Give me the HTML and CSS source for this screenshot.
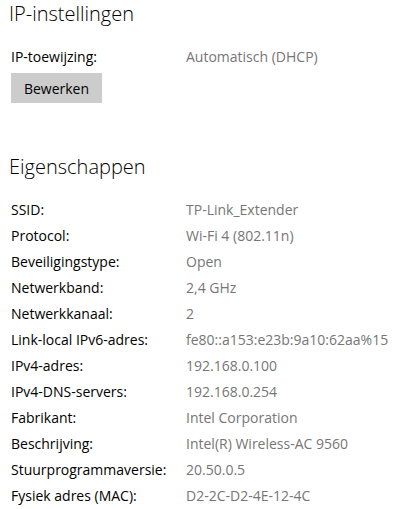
FILE: index.html
```html
<!DOCTYPE html>
<html lang="nl">
<head>
<meta charset="utf-8">
<title>Netwerkeigenschappen</title>
<link rel="stylesheet" href="styles.css">
</head>
<body>
<section class="section">
  <h2 class="heading">IP-instellingen</h2>
  <div class="props">
    <div class="label">IP-toewijzing:</div><div class="value">Automatisch (DHCP)</div>
  </div>
  <button class="btn" type="button">Bewerken</button>
</section>
<section class="section second">
  <h2 class="heading">Eigenschappen</h2>
  <div class="props list">
    <div class="label">SSID:</div><div class="value">TP-Link_Extender</div>
    <div class="label">Protocol:</div><div class="value">Wi-Fi 4 (802.11n)</div>
    <div class="label">Beveiligingstype:</div><div class="value">Open</div>
    <div class="label">Netwerkband:</div><div class="value">2,4 GHz</div>
    <div class="label">Netwerkkanaal:</div><div class="value">2</div>
    <div class="label">Link-local IPv6-adres:</div><div class="value">fe80::a153:e23b:9a10:62aa%15</div>
    <div class="label">IPv4-adres:</div><div class="value">192.168.0.100</div>
    <div class="label">IPv4-DNS-servers:</div><div class="value">192.168.0.254</div>
    <div class="label">Fabrikant:</div><div class="value">Intel Corporation</div>
    <div class="label">Beschrijving:</div><div class="value">Intel(R) Wireless-AC 9560</div>
    <div class="label">Stuurprogrammaversie:</div><div class="value">20.50.0.5</div>
    <div class="label">Fysiek adres (MAC):</div><div class="value">D2-2C-D2-4E-12-4C</div>
  </div>
</section>
</body>
</html>
```

FILE: styles.css
```css
html, body {
  margin: 0;
  padding: 0;
  background: #ffffff;
}
body {
  font-family: "Open Sans", "Noto Sans", sans-serif;
  font-size: 14px;
  color: #000000;
  padding-left: 11px;
}
.section {
  display: flex;
  flex-direction: column;
  align-items: flex-start;
}
.second {
  margin-top: 50px;
}
.heading {
  margin: 0 0 16px -2px;
  font-size: 20px;
  font-weight: 300;
  line-height: 28px;
  color: #000000;
}
.props {
  display: grid;
  grid-template-columns: 175px auto;
  grid-auto-rows: 26px;
  align-items: center;
  line-height: 20px;
}
.value {
  color: #767676;
}
.btn {
  margin-top: 3px;
  width: 91px;
  height: 30px;
  border: none;
  background: #cccccc;
  font-family: inherit;
  font-size: 14px;
  color: #000000;
  padding: 0;
}
```
